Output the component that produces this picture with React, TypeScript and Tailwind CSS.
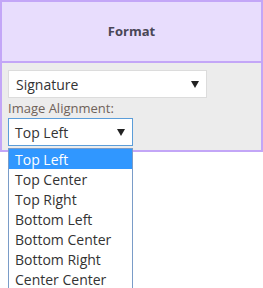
import React from "react";

const Arrow = () => (
  <svg width="8" height="7" viewBox="0 0 8 7" className="shrink-0">
    <path d="M0 0 L8 0 L4 7 Z" fill="#222" />
  </svg>
);

const options = [
  "Top Left",
  "Top Center",
  "Top Right",
  "Bottom Left",
  "Bottom Center",
  "Bottom Right",
  "Center Center",
];

export default function App() {
  return (
    <div
      className="relative w-[263px] h-[288px] bg-white overflow-hidden"
      style={{ fontFamily: '"Open Sans", sans-serif' }}
    >
      <div className="w-[263px] border-2 border-[#c3a6f7]">
        <div className="h-[61px] bg-[#e8ddfd] flex items-center justify-center border-b-2 border-[#c3a6f7]">
          <span className="text-[13px] font-bold text-[#4a4656]">Format</span>
        </div>
        <div className="h-[87px] bg-[#ececec] pt-[7px] px-[6px]">
          <div className="w-[199px] h-[28px] bg-white border border-[#dcdcdc] flex items-center justify-between pl-[7px] pr-[7px]">
            <span className="text-[14px] text-[#333]">Signature</span>
            <Arrow />
          </div>
          <div className="h-[20px] flex items-center text-[13px] text-[#6f625a] leading-none">
            Image Alignment:
          </div>
          <div className="w-[125px] h-[28px] bg-white border border-[#5b9dd9] flex items-center justify-between pl-[6px] pr-[7px]">
            <span className="text-[14px] text-[#333]">Top Left</span>
            <Arrow />
          </div>
        </div>
      </div>
      <div className="absolute left-[8px] top-[148px] w-[125px] bg-white border border-[#7a9cc8]">
        {options.map((o, i) => (
          <div
            key={o}
            className={
              i === 0
                ? "h-[20px] flex items-center pl-[6px] text-[14px] bg-[#3097ff] text-white"
                : "h-[20px] flex items-center pl-[6px] text-[14px] text-[#333]"
            }
          >
            {o}
          </div>
        ))}
      </div>
    </div>
  );
}
